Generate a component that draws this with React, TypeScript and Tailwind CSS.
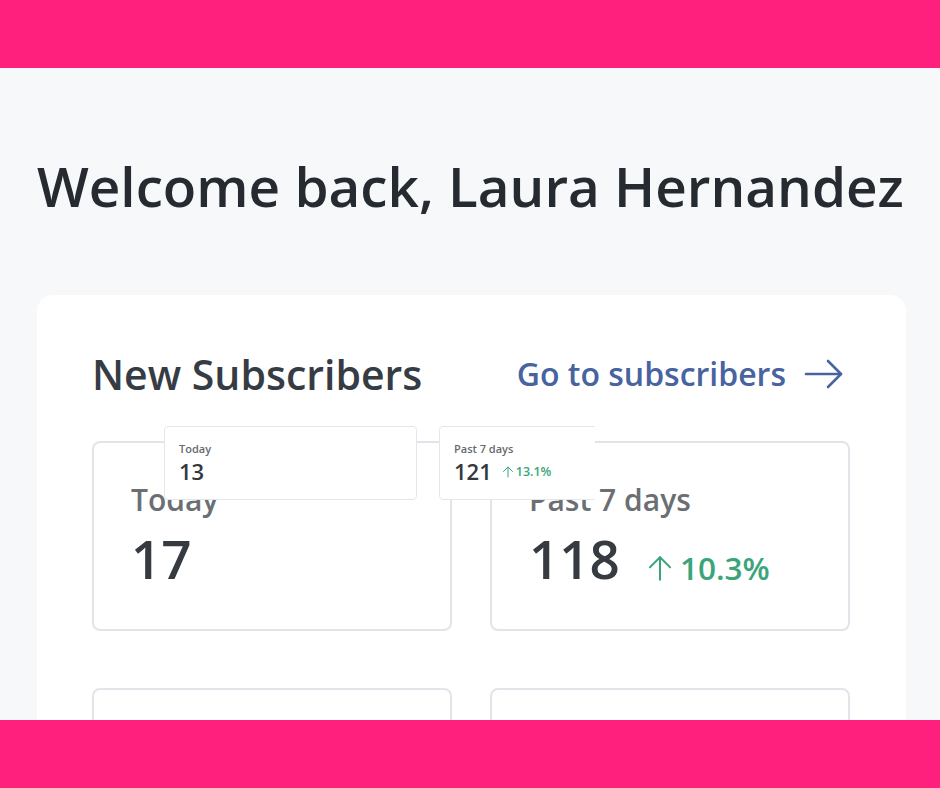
import React from "react";

const font = { fontFamily: '"Open Sans", "Noto Sans", sans-serif' };

const ArrowUp = ({ className, width = 2 }: { className?: string; width?: number }) => (
  <svg viewBox="0 0 24 24" fill="none" stroke="currentColor" strokeWidth={width} strokeLinecap="round" strokeLinejoin="round" className={className}>
    <path d="M12 22V2" />
    <path d="M3 11l9-9 9 9" />
  </svg>
);

const ArrowRight = ({ className }: { className?: string }) => (
  <svg viewBox="0 0 40 30" fill="none" stroke="currentColor" strokeWidth={2.6} strokeLinecap="round" strokeLinejoin="round" className={className}>
    <path d="M2 15h35" />
    <path d="M24 2l13 13-13 13" />
  </svg>
);

const StatCard = ({ label, value, change }: { label?: string; value?: string; change?: string }) => (
  <div className="h-[190px] rounded-lg border-2 border-[#e1e5ea] bg-white pl-[37px] pt-[38px]">
    {label && <div className="text-[30px] font-semibold leading-[38px] text-[#6b6f74]">{label}</div>}
    {value && (
      <div className="mt-[10px] flex items-end">
        <span className="text-[53px] font-semibold leading-[60px] text-[#363b41]">{value}</span>
        {change && (
          <span className="mb-[1px] ml-[26px] flex items-center text-[31.5px] font-semibold leading-[40px] text-[#3ba57a]">
            <ArrowUp className="mr-[6px] h-[27px] w-[28px]" width={1.8} />
            {change}
          </span>
        )}
      </div>
    )}
  </div>
);

const MiniCard = ({ label, value, change, width }: { label: string; value: string; change?: string; width: string }) => (
  <div className={`${width} h-[74px] shrink-0 rounded border border-[#e3e7eb] bg-white pl-[14px] pt-[15px]`}>
    <div className="text-[11px] font-semibold leading-[14px] text-[#666a70]">{label}</div>
    <div className="mt-[2px] flex items-center">
      <span className="text-[22px] font-semibold leading-[26px] text-[#33383e]">{value}</span>
      {change && (
        <span className="ml-[10px] mt-[2px] flex items-center text-[12.5px] font-semibold text-[#3ba57a]">
          <ArrowUp className="mr-[2px] h-[12px] w-[12px]" />
          {change}
        </span>
      )}
    </div>
  </div>
);

export default function App() {
  return (
    <div className="flex h-[788px] w-[940px] flex-col overflow-hidden bg-[#f7f8fa]" style={font}>
      <div className="h-[68px] shrink-0 bg-[#ff1f7d]" />
      <main className="flex-1 overflow-hidden px-[37px]">
        <h1 className="mt-[82px] whitespace-nowrap text-[54.8px] font-semibold leading-[72px] text-[#262b31]">
          Welcome back, Laura Hernandez
        </h1>
        <section className="relative mt-[73px] w-[869px] rounded-2xl bg-white pb-[60px] pl-[55px] pr-[56px] pt-[52px]">
          <div className="flex items-center justify-between">
            <h2 className="text-[41px] font-semibold leading-[54px] text-[#363c43]">New Subscribers</h2>
            <a href="#" className="mr-[6px] flex items-center text-[32px] font-semibold leading-[40px] text-[#4763a0]">
              Go to subscribers
              <ArrowRight className="ml-[18px] h-[30px] w-[40px]" />
            </a>
          </div>
          <div className="mt-[40px] grid grid-cols-2 gap-x-[38px] gap-y-[57px]">
            <StatCard label="Today" value="17" />
            <StatCard label="Past 7 days" value="118" change="10.3%" />
            <StatCard />
            <StatCard />
          </div>
          <div className="absolute left-[127px] top-[131px] flex w-[431px] gap-[22px] overflow-hidden">
            <MiniCard label="Today" value="13" width="w-[253px]" />
            <MiniCard label="Past 7 days" value="121" change="13.1%" width="w-[200px]" />
          </div>
        </section>
      </main>
      <div className="h-[68px] shrink-0 bg-[#ff1f7d]" />
    </div>
  );
}
